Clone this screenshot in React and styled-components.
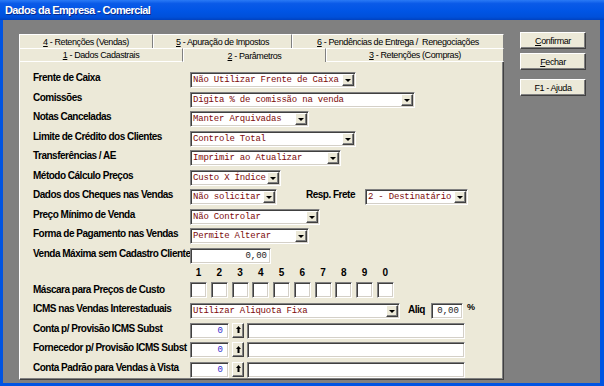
import React from 'react';
import styled, { createGlobalStyle, css } from 'styled-components';

const Global = createGlobalStyle`
  html, body { margin: 0; padding: 0; width: 604px; height: 386px; overflow: hidden; background: #808080; }
  * { box-sizing: border-box; }
`;

const Window = styled.div`
  width: 604px;
  height: 386px;
  display: flex;
  flex-direction: column;
  background: #0054e3;
  font-family: "Liberation Sans", Arial, sans-serif;
  color: #000;
`;

const TitleBar = styled.div`
  height: 20px;
  flex: none;
  display: flex;
  align-items: center;
  padding-left: 5px;
  background: linear-gradient(to bottom, #2a7af5 0%, #0a5ae8 18%, #0055e5 55%, #0050da 85%, #0042c0 100%);
  color: #fff;
  font-weight: bold;
  font-size: 11px;
  letter-spacing: -0.6px;
  text-shadow: 1px 1px 0 #0a2a8a;
`;

const Body = styled.div`
  flex: 1;
  display: flex;
  align-items: flex-start;
  margin: 0 4px 3px 3px;
  padding: 12px 0 3px 16px;
  background: #808080;
`;

const TabControl = styled.div`
  width: 485px;
  margin-top: 2px;
  display: flex;
  flex-direction: column;
`;

const TabRow = styled.div`
  display: flex;
  height: 14px;
`;

const Tab = styled.div`
  width: ${p => p.$w}px;
  flex: none;
  height: 14px;
  display: flex;
  align-items: center;
  justify-content: center;
  background: #ece9d8;
  border-top: 1px solid #fff;
  border-left: 1px solid #fff;
  border-right: 1px solid #808080;
  border-bottom: ${p => (p.$front && !p.$active ? '1px solid #fff' : 'none')};
  font-size: 9px;
  letter-spacing: -0.4px;
  white-space: pre;
  line-height: 12px;
  padding-top: ${p => (p.$front && !p.$active ? '0' : '1px')};
`;

const Panel = styled.div`
  height: 318px;
  background: #ece9d8;
  border-left: 1px solid #fff;
  border-right: 1px solid #404040;
  border-bottom: 1px solid #404040;
  box-shadow: inset -1px -1px 0 #808080;
  padding: 10px 0 0 13px;
`;

const Form = styled.div`
  display: flex;
  flex-direction: column;
  gap: 3.5px;
`;

const Row = styled.div`
  display: flex;
  align-items: flex-start;
  height: 16px;
`;

const Label = styled.div`
  width: ${p => (p.$w ? `${p.$w}px` : 'auto')};
  flex: none;
  font-weight: bold;
  font-size: 10px;
  letter-spacing: -0.5px;
  line-height: 11px;
  white-space: nowrap;
  margin-left: ${p => p.$ml || 0}px;
  margin-right: ${p => p.$mr || 0}px;
  margin-top: ${p => p.$mt || 0}px;
`;

const sunken = css`
  background: #fff;
  border: 1px solid;
  border-color: #808080 #fff #fff #808080;
  box-shadow: inset 1px 1px 0 #404040, inset -1px -1px 0 #d4d0c8;
`;

const raised = css`
  background: #ece9d8;
  border: 1px solid;
  border-color: #fff #404040 #404040 #fff;
  box-shadow: inset -1px -1px 0 #808080;
`;

const Combo = styled.div`
  ${sunken}
  width: ${p => p.$w}px;
  height: 16px;
  flex: none;
  display: flex;
  align-items: stretch;
  padding: 1px;
`;

const ComboText = styled.div`
  flex: 1;
  overflow: hidden;
  white-space: pre;
  font-family: "Liberation Mono", "Courier New", monospace;
  font-size: 9px;
  letter-spacing: -0.2px;
  line-height: 12px;
  color: #7d0a0a;
  padding-left: 1px;
`;

const DropBtn = styled.div`
  ${raised}
  width: 12px;
  flex: none;
  display: flex;
  align-items: center;
  justify-content: center;
  &::after {
    content: "";
    border-left: 3px solid transparent;
    border-right: 3px solid transparent;
    border-top: 3px solid #000;
    margin-top: 1px;
  }
`;

const TextBox = styled.div`
  ${sunken}
  width: ${p => p.$w}px;
  height: 16px;
  flex: none;
  font-family: "Liberation Mono", "Courier New", monospace;
  font-size: 9px;
  line-height: 14px;
  text-align: right;
  padding-right: ${p => p.$pr || 3}px;
  color: ${p => p.$color || '#222'};
`;

const UpBtn = styled.div`
  ${raised}
  width: 12px;
  height: 15px;
  flex: none;
  margin: 0 3px;
  display: flex;
  align-items: center;
  justify-content: center;
`;

const MaskBlock = styled.div`
  display: flex;
  flex-direction: column;
  gap: 3px;
  margin-bottom: 1.5px;
`;

const Digits = styled.div`
  display: flex;
  gap: 3.75px;
  margin-left: 157px;
  height: 12px;
`;

const Digit = styled.div`
  width: 17px;
  text-align: center;
  font-weight: bold;
  font-size: 10px;
  line-height: 12px;
`;

const Boxes = styled.div`
  display: flex;
  gap: 3.75px;
`;

const MaskBox = styled.div`
  ${sunken}
  width: 17px;
  height: 16px;
`;

const Percent = styled.div`
  font-weight: bold;
  font-size: 9px;
  line-height: 9px;
  margin-left: 4px;
`;

const Side = styled.div`
  width: 66px;
  margin-left: 16px;
  display: flex;
  flex-direction: column;
`;

const Button = styled.div`
  ${raised}
  height: 17px;
  margin-top: ${p => p.$gap || 0}px;
  display: flex;
  align-items: center;
  justify-content: center;
  font-size: 9px;
  letter-spacing: -0.4px;
`;

const Arrow = () => (
  <svg width="5" height="8" viewBox="0 0 5 8">
    <polygon points="2.5,0 5,3 0,3" fill="#000" />
    <rect x="1.5" y="3" width="2" height="4" fill="#000" />
  </svg>
);

const Select = ({ w, children }) => (
  <Combo $w={w}>
    <ComboText>{children}</ComboText>
    <DropBtn />
  </Combo>
);

const LookupRow = ({ label }) => (
  <Row>
    <Label $w={157}>{label}</Label>
    <TextBox $w={39} $pr={5} $color="#2a2acc">0</TextBox>
    <UpBtn><Arrow /></UpBtn>
    <TextBox $w={218} />
  </Row>
);

const digits = ['1', '2', '3', '4', '5', '6', '7', '8', '9', '0'];

export default function App() {
  return (
    <>
      <Global />
      <Window>
        <TitleBar>Dados da Empresa - Comercial</TitleBar>
        <Body>
          <TabControl>
            <TabRow>
              <Tab $w={134}><u>4</u> - Retenções (Vendas)</Tab>
              <Tab $w={139}><u>5</u> - Apuração de Impostos</Tab>
              <Tab $w={212}><u>6</u> - Pendências de Entrega /  Renegociações</Tab>
            </TabRow>
            <TabRow>
              <Tab $w={164} $front><u>1</u> - Dados Cadastrais</Tab>
              <Tab $w={143} $front $active><u>2</u> - Parâmetros</Tab>
              <Tab $w={178} $front><u>3</u> - Retenções (Compras)</Tab>
            </TabRow>
            <Panel>
              <Form>
                <Row>
                  <Label $w={157}>Frente de Caixa</Label>
                  <Select w={166}>Não Utilizar Frente de Caixa</Select>
                </Row>
                <Row>
                  <Label $w={157}>Comissões</Label>
                  <Select w={225}>Digita % de comissão na venda</Select>
                </Row>
                <Row>
                  <Label $w={157}>Notas Canceladas</Label>
                  <Select w={119}>Manter Arquivadas</Select>
                </Row>
                <Row>
                  <Label $w={157}>Limite de Crédito dos Clientes</Label>
                  <Select w={166}>Controle Total</Select>
                </Row>
                <Row>
                  <Label $w={157}>Transferências / AE</Label>
                  <Select w={151}>Imprimir ao Atualizar</Select>
                </Row>
                <Row>
                  <Label $w={157}>Método Cálculo Preços</Label>
                  <Select w={91}>Custo X Índice</Select>
                </Row>
                <Row>
                  <Label $w={157}>Dados dos Cheques nas Vendas</Label>
                  <Select w={87}>Não solicitar</Select>
                  <Label $ml={29} $mr={10}>Resp. Frete</Label>
                  <Select w={103}>2 - Destinatário</Select>
                </Row>
                <Row>
                  <Label $w={157}>Preço Mínimo de Venda</Label>
                  <Select w={130}>Não Controlar</Select>
                </Row>
                <Row>
                  <Label $w={157}>Forma de Pagamento nas Vendas</Label>
                  <Select w={119}>Permite Alterar</Select>
                </Row>
                <Row>
                  <Label $w={157}>Venda Máxima sem Cadastro Cliente</Label>
                  <TextBox $w={81} $pr={3}>0,00</TextBox>
                </Row>
                <MaskBlock>
                  <Digits>
                    {digits.map(d => <Digit key={d}>{d}</Digit>)}
                  </Digits>
                  <Row>
                    <Label $w={157} $mt={2}>Máscara para Preços de Custo</Label>
                    <Boxes>
                      {digits.map(d => <MaskBox key={d} />)}
                    </Boxes>
                  </Row>
                </MaskBlock>
                <Row>
                  <Label $w={157}>ICMS nas Vendas Interestaduais</Label>
                  <Select w={210}>Utilizar Aliquota Fixa</Select>
                  <Label $ml={8} $mr={6} $mt={1}>Aliq</Label>
                  <TextBox $w={32} $pr={3}>0,00</TextBox>
                  <Percent>%</Percent>
                </Row>
                <LookupRow label="Conta p/ Provisão ICMS Subst" />
                <LookupRow label="Fornecedor p/ Provisão ICMS Subst" />
                <LookupRow label="Conta Padrão para Vendas à Vista" />
              </Form>
            </Panel>
          </TabControl>
          <Side>
            <Button><span><u>C</u>onfirmar</span></Button>
            <Button $gap={4}><span><u>F</u>echar</span></Button>
            <Button $gap={9}>F1 - Ajuda</Button>
          </Side>
        </Body>
      </Window>
    </>
  );
}
